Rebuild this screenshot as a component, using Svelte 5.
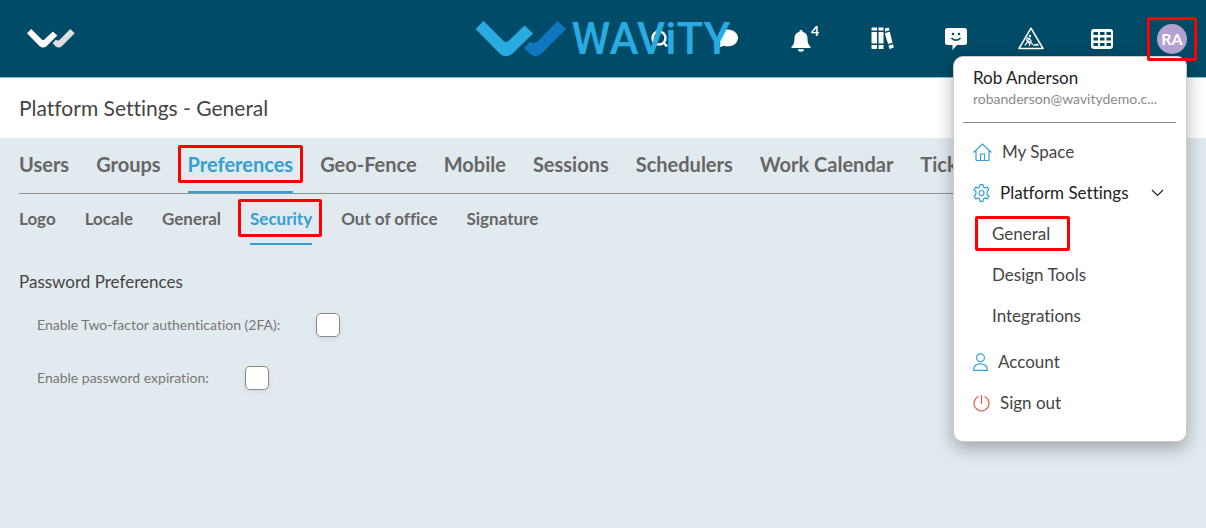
<script>
let tab = 'Preferences';
let subTab = 'Security';
let page = 'General';
let settingsOpen = true;
let twoFactor = false;
let expiration = false;

const tabs = ['Users', 'Groups', 'Preferences', 'Geo-Fence', 'Mobile', 'Sessions', 'Schedulers', 'Work Calendar', 'Tickets'];
const subTabs = ['Logo', 'Locale', 'General', 'Security', 'Out of office', 'Signature'];
const pages = ['General', 'Design Tools', 'Integrations'];
</script>

<div class="app">
  <header>
    <a class="home" href="#home" aria-label="Home">
      <svg width="48" height="19" viewBox="0 0 91 36">
        <path d="M0 8L8 0l20 20q2.500 2 5 0L49 4.500l8.500 8L37 32.500q-6.500 5.500-13 0z" fill="#fff" />
        <path d="M82 0l8.500 8L66 32.500q-6 5-12 0L48.500 27l6-6.500q4 3 7.500 0z" fill="#dcdee0" />
      </svg>
    </a>

    <nav class="tools" aria-label="Tools">
      <button class="search" type="button" aria-label="Search">
        <svg width="18" height="18" viewBox="0 0 18 18" fill="none" stroke="#fff">
          <circle cx="8" cy="8" r="6.5" stroke-width="2.4" />
          <path d="M12 12l4 4.5" stroke-width="2.6" />
        </svg>
      </button>
      <button type="button" aria-label="Chat">
        <svg width="20" height="19" viewBox="0 0 20 19">
          <path d="M10 .5C4.500.5 0 4 0 9c0 2.500 1 4.500 2.500 5.500L1 18.500l5-1.800c1.200.4 2.600.6 4 .6 5.500 0 10-3.500 10-8.300S15.500.5 10 .5z" fill="#fff" />
        </svg>
      </button>
      <button class="bell" type="button" aria-label="Notifications">
        <svg width="20" height="22" viewBox="0 0 20 22" fill="#fff">
          <path d="M10 0c1 0 1.600.7 1.600 1.700C14.800 2.500 16.500 5 16.500 8c0 5 1 7 3 8.500V18H.5v-1.500c2-1.500 3-3.500 3-8.500 0-3 1.700-5.500 4.900-6.300C8.400.7 9 0 10 0z" />
          <path d="M7 19.200h6a3 2.500 0 0 1-6 0z" />
        </svg>
        <span class="count">4</span>
      </button>
      <button type="button" aria-label="Library">
        <svg width="23" height="23" viewBox="0 0 23 23" fill="#fff">
          <path d="M1 .5h5v3H.5V1zM.5 5h5.500v11.500H.5zM.5 18h5.500v4H1l-.5-.5zM7.500.5h5v3h-5zM7.500 5h5v11.500h-5zM7.500 18h5v4h-5z" />
          <path d="M14 1.500l3.500-1 1 2.800-4.500 1.200zM14.200 6l4.600-1.300 2.700 11-4.400 1.200-2.900-9zM17.500 18.500l4.500-1.200.8 3.200-4 1.500-.6-.4z" />
        </svg>
      </button>
      <button type="button" aria-label="Feedback">
        <svg width="22" height="22" viewBox="0 0 22 22">
          <path d="M2.500 0h17Q22 0 22 2.500v12q0 2.500-2.500 2.500H12l-4.500 5V17h-5Q0 17 0 14.500v-12Q0 0 2.500 0z" fill="#fff" />
          <circle cx="8" cy="6" r="1.300" fill="#004b67" />
          <circle cx="14" cy="6" r="1.300" fill="#004b67" />
          <path d="M6.500 10q4.500 4.500 9 0" fill="none" stroke="#004b67" stroke-width="1.700" />
        </svg>
      </button>
      <button class="wide" type="button" aria-label="Work orders">
        <svg width="26" height="23" viewBox="0 0 26 23" fill="none" stroke="#fff">
          <path d="M13 1.200L25 21.500H1z" stroke-width="1.500" stroke-linejoin="round" />
          <circle cx="12" cy="9" r="1.200" fill="#fff" stroke="none" />
          <path d="M8.500 11l3 .5 2 3.500M11 11.500l-1.500 3 2 1.500v3M9.500 14.500L7 18.500M8 12.500l7 5" stroke-width="1.300" />
          <path d="M14.500 18.700l2.500-2 1 .8 1.500-1.500 1.500 2.700z" fill="#fff" stroke="none" />
        </svg>
      </button>
      <button class="grid" type="button" aria-label="Apps">
        <svg width="22" height="20" viewBox="0 0 22 20">
          <rect width="22" height="20" rx="3" fill="#fff" />
          <path d="M2.500 3h4.500v3H2.500zM9 3h4.500v3H9zM15.500 3H20v3h-4.500zM2.500 8.500h4.500v3H2.500zM9 8.500h4.500v3H9zM15.500 8.500H20v3h-4.500zM2.500 14h4.500v3H2.500zM9 14h4.500v3H9zM15.500 14H20v3h-4.500z" fill="#004b67" />
        </svg>
      </button>
      <button class="avatar marked" type="button" on:click={() => settingsOpen = !settingsOpen}>RA</button>
    </nav>

    <div class="brand">
      <svg width="91" height="36" viewBox="0 0 91 36">
        <path d="M0 8L8 0l20 20q2.500 2 5 0L49 4.500l8.500 8L37 32.500q-6.500 5.500-13 0z" fill="#29abe2" />
        <path d="M82 0l8.500 8L66 32.500q-6 5-12 0L48.500 27l6-6.500q4 3 7.500 0z" fill="#1076bf" />
      </svg>
      <span>WAViTY</span>
    </div>
  </header>

  <h1>Platform Settings - General</h1>

  <main>
    <nav class="tabs" aria-label="Settings">
      {#each tabs as name}
        <button type="button" class:active={tab === name} on:click={() => tab = name}>
          <span class:marked={tab === name}>{name}</span>
        </button>
      {/each}
    </nav>
    <nav class="tabs sub" aria-label="Preferences">
      {#each subTabs as name}
        <button type="button" class:active={subTab === name} on:click={() => subTab = name}>
          <span class:marked={subTab === name}>{name}</span>
        </button>
      {/each}
    </nav>

    <h2>Password Preferences</h2>
    <div class="field">
      <label for="two-factor">Enable Two-factor authentication (2FA):</label>
      <input id="two-factor" type="checkbox" bind:checked={twoFactor} />
    </div>
    <div class="field">
      <label for="expiration">Enable password expiration:</label>
      <input id="expiration" type="checkbox" bind:checked={expiration} />
    </div>
  </main>

  <aside class="menu">
    <div class="user">
      <div class="name">Rob Anderson</div>
      <div class="email">robanderson@wavitydemo.c...</div>
    </div>
    <a class="item" href="#space">
      <svg width="19" height="18" viewBox="0 0 19 18">
        <path d="M.5 9.500L9.500 1l9 8.500M3 7.500v9q0 1 1 1h11q1 0 1-1v-9M7.500 17.500v-6.500h4v6.500" />
      </svg>
      My Space
    </a>
    <button class="item open" type="button" on:click={() => settingsOpen = !settingsOpen}>
      <svg width="17" height="18" viewBox="0 0 17 18">
        <path d="M6.500 3L7 .7h3l.5 2.300 1.500.9 2.300-.8 1.600 2.700-1.800 1.700v3l1.800 1.700-1.600 2.700-2.300-.8-1.500.9-.5 2.300H7l-.5-2.300-1.500-.9-2.300.8L1.100 12.200l1.800-1.700v-3L1.100 5.800l1.600-2.700 2.300.8z" stroke-linejoin="round" />
        <circle cx="8.500" cy="9" r="2.500" />
      </svg>
      Platform Settings
      <svg class="chevron" width="13" height="8" viewBox="0 0 13 8">
        <path d="M1 1l5.500 5.500L12 1" />
      </svg>
    </button>
    {#if settingsOpen}
      {#each pages as name}
        <a class="item child" href="#{name}"><span class:marked={page === name}>{name}</span></a>
      {/each}
    {/if}
    <a class="item account" href="#account">
      <svg width="15" height="18" viewBox="0 0 15 18">
        <circle cx="7.500" cy="4.700" r="3.900" />
        <path d="M.6 17.300q0-6.500 6.900-6.500t6.900 6.500z" />
      </svg>
      Account
    </a>
    <button class="item exit" type="button">
      <svg width="17" height="18" viewBox="0 0 17 18">
        <path d="M8.500 1v9M5.500 2.500a7.500 7.500 0 1 0 6 0" />
      </svg>
      Sign out
    </button>
  </aside>
</div>

<style>
:global(body) {
  margin: 0;
  background: #e1eaef;
}
.app {
  position: relative;
  min-height: 100vh;
  overflow: hidden;
  background: #e1eaef;
  color: #444;
  font-family: Lato, sans-serif;
  font-variant-ligatures: none;
}
button {
  padding: 0;
  border: 0;
  background: none;
  color: inherit;
  font: inherit;
  cursor: pointer;
}
a {
  color: inherit;
  text-decoration: none;
}
svg {
  display: block;
  flex: none;
}

header {
  position: relative;
  display: flex;
  align-items: center;
  justify-content: space-between;
  height: 77px;
  padding: 0 19px 0 27px;
  border-bottom: 1px solid #8cc3d6;
  background: #004b67;
}
.tools {
  display: flex;
  align-items: center;
  gap: 44px;
}
.tools button {
  display: flex;
  justify-content: center;
  width: 30px;
}
.tools .search {
  width: 18px;
}
.tools .bell {
  width: 36px;
  align-items: center;
}
.bell svg {
  margin-top: 4px;
}
.tools .wide {
  width: 32px;
}
.tools .grid {
  width: 22px;
}
.count {
  height: 34px;
  color: #fff;
  font-size: 14px;
  font-weight: 700;
  line-height: 18px;
}
.tools .avatar {
  position: relative;
  z-index: 3;
  align-items: center;
  height: 30px;
  border-radius: 50%;
  background: #b3a2cf;
  color: #fff;
  font-size: 16px;
  font-weight: 700;
}
.brand {
  position: absolute;
  top: 21px;
  left: 50%;
  display: flex;
  gap: 5px;
  transform: translateX(-50%);
  color: #29abe2;
  font: 500 44px/36px Roboto, sans-serif;
  pointer-events: none;
}

/* red callout frames */
.marked {
  position: relative;
}
.marked::after {
  content: '';
  position: absolute;
  inset: -7px -10px;
  border: 3px solid #f00;
  border-radius: 2px;
  pointer-events: none;
}

h1 {
  margin: 0;
  padding: 0 19px;
  background: #fff;
  font-size: 21px;
  font-weight: 400;
  line-height: 60px;
}
main {
  padding: 0 19px;
}
.tabs {
  display: flex;
  gap: 27px;
  height: 55px;
  border-bottom: 1px solid #929292;
  color: #666;
  font-size: 20px;
  font-weight: 700;
  white-space: nowrap;
}
.tabs button {
  flex: none;
  padding-bottom: 2px;
  border-bottom: 2px solid transparent;
}
.tabs .active {
  border-color: #34a0d2;
  color: #34a0d2;
}
.tabs.sub {
  gap: 29px;
  height: 51px;
  border: 0;
  font-size: 17px;
}
.sub button {
  padding-bottom: 0;
}
.sub .marked::after {
  inset: -9px -10px -8px -12px;
}
h2 {
  margin: 24px 0 18px;
  font-size: 17px;
  font-weight: 400;
  line-height: 26px;
}
.field {
  display: flex;
  align-items: center;
  gap: 36px;
  margin: 0 0 29px 18px;
  color: #777;
  font-size: 14px;
}
.field label {
  padding-bottom: 2px;
}
.field input {
  appearance: none;
  width: 24px;
  height: 24px;
  margin: 0;
  border: 1px solid #888;
  border-radius: 5px;
  background: #fff;
  box-shadow: 0 3px 6px rgba(0, 0, 0, 0.06);
}
.field input:checked {
  background: #34a0d2;
}

.menu {
  position: absolute;
  z-index: 2;
  top: 56px;
  right: 19px;
  box-sizing: border-box;
  width: 234px;
  padding: 9px 10px 18px 9px;
  border: 1px solid #ccc;
  border-radius: 10px;
  background: #fff;
  box-shadow: 0 6px 18px rgba(0, 0, 0, 0.3);
  font-size: 17px;
}
.user {
  padding: 0 10px 14px;
  margin-bottom: 8px;
  border-bottom: 1px solid #8a8a8a;
}
.name {
  color: #222;
  line-height: 24px;
}
.email {
  color: #8a8a8a;
  font-size: 14px;
  line-height: 18px;
}
.item {
  display: flex;
  align-items: center;
  gap: 10px;
  width: 100%;
  height: 41px;
  box-sizing: border-box;
  padding: 0 10px;
}
.item svg {
  fill: none;
  stroke: #34a0d2;
  stroke-width: 1.2;
}
.open {
  color: #222;
}
.item .chevron {
  margin: 0 2px 0 auto;
  stroke: #222;
}
.child {
  padding-left: 29px;
}
.child .marked::after {
  inset: -7px -20px -7px -17px;
}
.account {
  margin-top: 5px;
}
.exit svg {
  stroke: #dc5a46;
}
</style>
